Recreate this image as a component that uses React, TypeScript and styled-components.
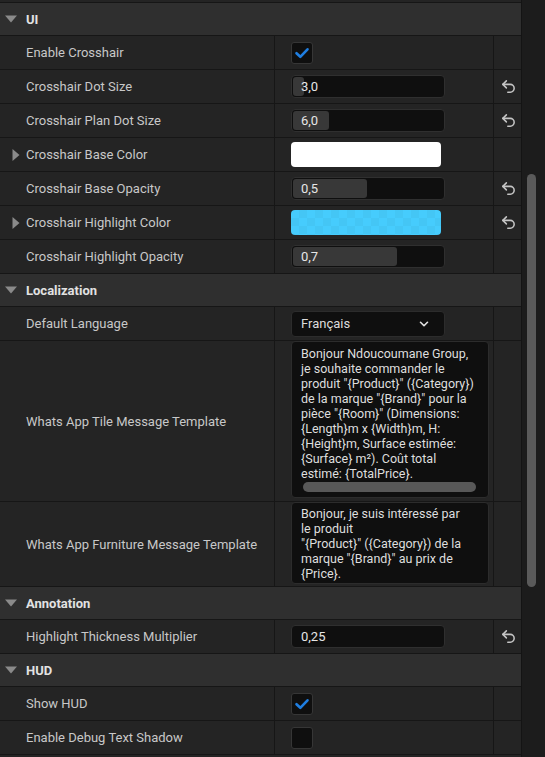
import React from "react";
import styled, { createGlobalStyle } from "styled-components";

const Global = createGlobalStyle`
  html, body { margin: 0; padding: 0; background: #1b1b1b; }
  body { font-family: Roboto, "Noto Sans", "Liberation Sans", sans-serif; }
  * { box-sizing: border-box; }
`;

const Page = styled.div`
  display: flex;
  width: 545px;
  height: 757px;
  overflow: hidden;
  background: #1b1b1b;
`;

const Panel = styled.div`
  width: 522px;
  display: flex;
  flex-direction: column;
  background: #161616;
  border-right: 1px solid #141414;
`;

const Track = styled.div`
  flex: 1;
  position: relative;
  background: #1c1c1c;
`;

const Thumb = styled.div`
  position: absolute;
  left: 5px;
  top: 174px;
  width: 9px;
  height: 413px;
  border-radius: 5px;
  background: #5a5a5a;
`;

const Row = styled.div<{ $h?: number }>`
  display: grid;
  grid-template-columns: 275px 219px 1fr;
  min-height: ${(p) => p.$h ?? 34}px;
  background: #242424;
  border-bottom: 1px solid #161616;
  flex-shrink: 0;
`;

const Header = styled.div`
  display: flex;
  align-items: center;
  height: 33px;
  background: #2f2f2f;
  border-bottom: 1px solid #161616;
  color: #e2e2e2;
  font-size: 13px;
  font-weight: 700;
  flex-shrink: 0;
`;

const Caret = styled.span`
  width: 26px;
  display: flex;
  justify-content: center;
  padding-right: 4px;
`;

const Cell = styled.div`
  display: flex;
  align-items: center;
  border-right: 1px solid #161616;
`;

const NameCell = styled(Cell)`
  color: #c8c8c8;
  font-size: 13px;
  padding-left: 6px;
`;

const ValueCell = styled(Cell)<{ $top?: boolean }>`
  padding-left: 16px;
  align-items: ${(p) => (p.$top ? "flex-start" : "center")};
`;

const ResetCell = styled.div`
  display: flex;
  align-items: center;
  justify-content: center;
  padding-left: 1px;
`;

const Expander = styled.span`
  width: 20px;
  display: flex;
  justify-content: center;
`;

const Check = styled.div`
  width: 22px;
  height: 22px;
  border-radius: 3px;
  background: #0f0f0f;
  border: 1px solid #363636;
  display: flex;
  align-items: center;
  justify-content: center;
`;

const NumBox = styled.div`
  position: relative;
  width: 154px;
  height: 23px;
  border-radius: 4px;
  background: #0f0f0f;
  border: 1px solid #2f2f2f;
  display: flex;
  align-items: center;
  color: #e6e6e6;
  font-size: 13px;
  padding-left: 9px;
`;

const Fill = styled.div`
  position: absolute;
  left: 1px;
  top: 1px;
  bottom: 1px;
  border-radius: 3px;
  background: #383838;
`;

const NumText = styled.span`
  position: relative;
`;

const Swatch = styled.div<{ $c: string; $checker?: boolean }>`
  width: 150px;
  height: 25px;
  border-radius: 4px;
  background-color: ${(p) => p.$c};
  background-image: ${(p) =>
    p.$checker
      ? "linear-gradient(45deg, rgba(0,0,0,0.03) 25%, transparent 25%, transparent 75%, rgba(0,0,0,0.03) 75%), linear-gradient(45deg, rgba(0,0,0,0.03) 25%, transparent 25%, transparent 75%, rgba(0,0,0,0.03) 75%)"
      : "none"};
  background-size: 16px 16px;
  background-position: 0 0, 8px 8px;
`;

const Combo = styled.div`
  width: 154px;
  height: 26px;
  border-radius: 4px;
  background: #0f0f0f;
  border: 1px solid #2c2c2c;
  display: flex;
  align-items: center;
  justify-content: space-between;
  padding: 0 13px 0 9px;
  color: #dcdcdc;
  font-size: 13px;
`;

const TextArea = styled.div<{ $h: number; $pt: number }>`
  position: relative;
  width: 198px;
  height: ${(p) => p.$h}px;
  border-radius: 4px;
  background: #0f0f0f;
  border: 1px solid #2c2c2c;
  padding: ${(p) => p.$pt}px 0 0 9px;
  color: #dedede;
  font-size: 12.5px;
  line-height: 15px;
  white-space: pre;
`;

const HScroll = styled.div`
  position: absolute;
  left: 11px;
  right: 12px;
  bottom: 5px;
  height: 10px;
  border-radius: 5px;
  background: #585858;
`;

const DownTri = () => (
  <svg width="12" height="8" viewBox="0 0 12 8">
    <path d="M0 0.5 H12 L6 7.5 Z" fill="#8a8a8a" />
  </svg>
);

const RightTri = () => (
  <svg width="8" height="12" viewBox="0 0 8 12">
    <path d="M0.5 0 V12 L7.5 6 Z" fill="#8a8a8a" />
  </svg>
);

const Reset = () => (
  <svg width="17" height="17" viewBox="0 0 24 24" fill="none" stroke="#c4c4c4" strokeWidth="2.2" strokeLinecap="round" strokeLinejoin="round">
    <path d="M9 14 4 9l5-5" />
    <path d="M4 9h10.5a5.5 5.5 0 0 1 5.5 5.5a5.5 5.5 0 0 1-5.5 5.5H11" />
  </svg>
);

const Tick = () => (
  <svg width="16" height="16" viewBox="0 0 16 16" fill="none">
    <path d="M2.5 8.2 L6.3 11.8 L13.5 4.3" stroke="#1f7ee0" strokeWidth="2.6" strokeLinecap="round" strokeLinejoin="round" />
  </svg>
);

const Chevron = () => (
  <svg width="14" height="14" viewBox="0 0 24 24" fill="none" stroke="#e2e2e2" strokeWidth="2.8" strokeLinecap="round" strokeLinejoin="round">
    <path d="m6 9 6 6 6-6" />
  </svg>
);

const Section = ({ title }: { title: string }) => (
  <Header>
    <Caret>
      <DownTri />
    </Caret>
    {title}
  </Header>
);

type PropRow = {
  name: string;
  expand?: boolean;
  reset?: boolean;
  value: React.ReactNode;
};

const Prop = ({ name, expand, reset, value }: PropRow) => (
  <Row>
    <NameCell>
      <Expander>{expand ? <RightTri /> : null}</Expander>
      {name}
    </NameCell>
    <ValueCell>{value}</ValueCell>
    <ResetCell>{reset ? <Reset /> : null}</ResetCell>
  </Row>
);

const Num = ({ text, fill }: { text: string; fill?: number }) => (
  <NumBox>
    {fill !== undefined ? <Fill style={{ width: fill }} /> : null}
    <NumText>{text}</NumText>
  </NumBox>
);

const tileText = [
  "Bonjour Ndoucoumane Group,",
  "je souhaite commander le",
  'produit "{Product}" ({Category})',
  'de la marque "{Brand}" pour la',
  'pièce "{Room}" (Dimensions:',
  "{Length}m x {Width}m, H:",
  "{Height}m, Surface estimée:",
  "{Surface} m²). Coût total",
  "estimé: {TotalPrice}.",
].join("\n");

const furnText = [
  "Bonjour, je suis intéressé par",
  "le produit",
  '"{Product}" ({Category}) de la',
  'marque "{Brand}" au prix de',
  "{Price}.",
].join("\n");

export default function App() {
  return (
    <>
      <Global />
      <Page>
        <Panel>
          <Row $h={3} />
          <Section title="UI" />
          <Prop name="Enable Crosshair" value={<Check><Tick /></Check>} />
          <Prop name="Crosshair Dot Size" reset value={<Num text="3,0" fill={11} />} />
          <Prop name="Crosshair Plan Dot Size" reset value={<Num text="6,0" fill={36} />} />
          <Prop name="Crosshair Base Color" expand value={<Swatch $c="#ffffff" />} />
          <Prop name="Crosshair Base Opacity" reset value={<Num text="0,5" fill={74} />} />
          <Prop name="Crosshair Highlight Color" expand reset value={<Swatch $c="#46ccfd" $checker />} />
          <Prop name="Crosshair Highlight Opacity" value={<Num text="0,7" fill={104} />} />
          <Section title="Localization" />
          <Prop name="Default Language" value={<Combo>Français<Chevron /></Combo>} />
          <Row $h={161}>
            <NameCell>
              <Expander />
              Whats App Tile Message Template
            </NameCell>
            <ValueCell $top>
              <TextArea $h={157} $pt={4}>
                {tileText}
                <HScroll />
              </TextArea>
            </ValueCell>
            <ResetCell />
          </Row>
          <Row $h={85}>
            <NameCell>
              <Expander />
              Whats App Furniture Message Template
            </NameCell>
            <ValueCell $top>
              <TextArea $h={82} $pt={3}>{furnText}</TextArea>
            </ValueCell>
            <ResetCell />
          </Row>
          <Section title="Annotation" />
          <Prop name="Highlight Thickness Multiplier" reset value={<Num text="0,25" />} />
          <Section title="HUD" />
          <Prop name="Show HUD" value={<Check><Tick /></Check>} />
          <Prop name="Enable Debug Text Shadow" value={<Check />} />
          <Row $h={4} />
        </Panel>
        <Track>
          <Thumb />
        </Track>
      </Page>
    </>
  );
}
